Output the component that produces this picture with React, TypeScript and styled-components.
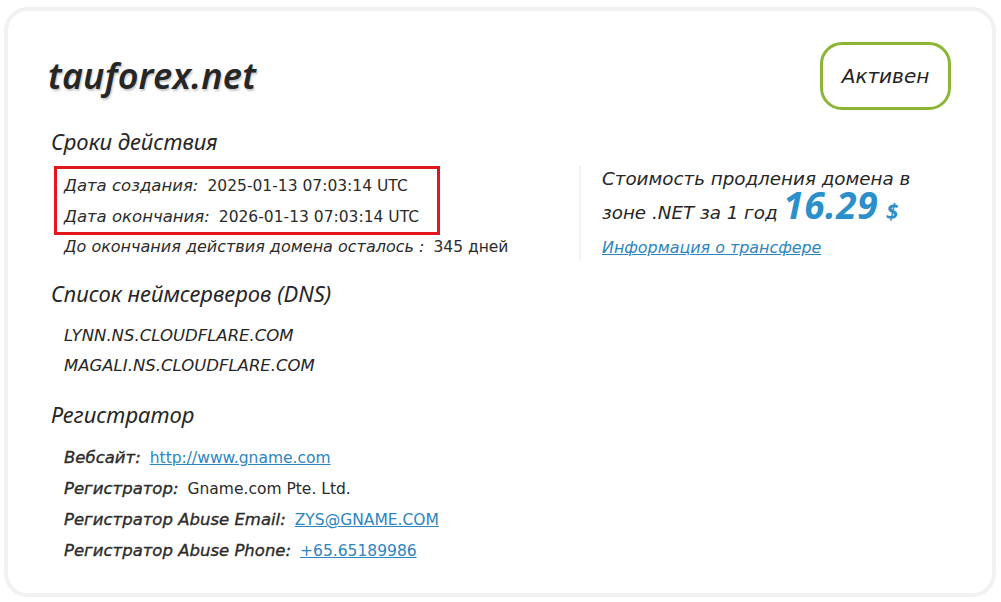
import React from 'react';
import styled, { createGlobalStyle } from 'styled-components';

const GlobalStyle = createGlobalStyle`
  html, body {
    margin: 0;
    padding: 0;
    background: #ffffff;
  }
  body {
    font-family: 'DejaVu Sans', 'Noto Sans', sans-serif;
    color: #2b2b2b;
  }
`;

const DATES = [
  { id: 1, label: 'Дата создания:', value: '2025-01-13 07:03:14 UTC' },
  { id: 2, label: 'Дата окончания:', value: '2026-01-13 07:03:14 UTC' },
];

const NAMESERVERS = ['LYNN.NS.CLOUDFLARE.COM', 'MAGALI.NS.CLOUDFLARE.COM'];

const REGISTRAR = [
  { id: 1, label: 'Вебсайт:', value: 'http://www.gname.com', link: true },
  { id: 2, label: 'Регистратор:', value: 'Gname.com Pte. Ltd.', link: false },
  { id: 3, label: 'Регистратор Abuse Email:', value: 'ZYS@GNAME.COM', link: true },
  { id: 4, label: 'Регистратор Abuse Phone:', value: '+65.65189986', link: true },
];

const App = () => {
  return (
    <>
      <GlobalStyle />
      <Page>
        <Card>
          <Header>
            <Domain>tauforex.net</Domain>
            <StatusBadge>Активен</StatusBadge>
          </Header>

          <SectionTitle>Сроки действия</SectionTitle>
          <TermsRow>
            <TermsMain>
              <Highlight>
                {DATES.map(({ id, label, value }) => (
                  <InfoRow key={id}>
                    <Label>{label}</Label>
                    <Value>{value}</Value>
                  </InfoRow>
                ))}
              </Highlight>
              <InfoRow $indent $height={24}>
                <DaysLabel>До окончания действия домена осталось :</DaysLabel>
                <Value>345 дней</Value>
              </InfoRow>
            </TermsMain>
            <PriceBox>
              <PriceText>
                Стоимость продления домена в зоне .NET за 1 год{' '}
                <Price>16.29</Price>
                <Currency>$</Currency>
              </PriceText>
              <TransferLink href="#">Информация о трансфере</TransferLink>
            </PriceBox>
          </TermsRow>

          <SectionTitle>Список неймсерверов (DNS)</SectionTitle>
          <List $top={4} $bottom={9}>
            {NAMESERVERS.map((ns) => (
              <ServerRow key={ns}>{ns}</ServerRow>
            ))}
          </List>

          <SectionTitle>Регистратор</SectionTitle>
          <List $top={4} $bottom={0}>
            {REGISTRAR.map(({ id, label, value, link }) => (
              <InfoRow key={id}>
                <Label $bold>{label}</Label>
                {link ? <ValueLink href="#">{value}</ValueLink> : <Value>{value}</Value>}
              </InfoRow>
            ))}
          </List>
        </Card>
      </Page>
    </>
  );
};

export default App;

const Page = styled.div`
  width: 1001px;
  height: 602px;
  padding: 7px 5px 5px 4px;
  box-sizing: border-box;
`;

const Card = styled.div`
  box-sizing: border-box;
  height: 590px;
  border: 4px solid #f1f1f1;
  border-radius: 24px;
  padding: 30px 40px 0 40px;
  display: flex;
  flex-direction: column;
`;

const Header = styled.div`
  display: flex;
  justify-content: space-between;
  align-items: flex-start;
  height: 76px;
`;

const Domain = styled.h1`
  margin: 0;
  padding-top: 10px;
  font-family: 'Noto Sans', sans-serif;
  font-size: 36px;
  font-weight: 600;
  font-style: italic;
  color: #262626;
  text-shadow: 1px 2px 2px rgba(0, 0, 0, 0.22);
  letter-spacing: 0.2px;
`;

const StatusBadge = styled.div`
  box-sizing: border-box;
  width: 131px;
  height: 68px;
  margin-right: 1px;
  margin-top: 1px;
  border: 3px solid #8bb634;
  border-radius: 22px;
  display: flex;
  align-items: center;
  justify-content: center;
  font-size: 20px;
  font-style: italic;
  color: #222;
`;

const SectionTitle = styled.h2`
  margin: 0;
  padding-left: 3px;
  height: 48px;
  line-height: 48px;
  font-family: 'Noto Sans', sans-serif;
  font-size: 22px;
  font-weight: 400;
  font-style: italic;
  color: #262626;
`;

const TermsRow = styled.div`
  display: flex;
  align-items: flex-start;
  margin-bottom: 9px;
`;

const TermsMain = styled.div`
  width: 531px;
  padding-top: 1px;
`;

const Highlight = styled.div`
  width: 386px;
  box-sizing: border-box;
  margin-left: 6px;
  border: 3px solid #e3161b;
  padding: 1px 0 0 7px;
`;

const InfoRow = styled.div<{ $indent?: boolean; $height?: number }>`
  display: flex;
  align-items: baseline;
  gap: 9px;
  height: ${({ $height }) => $height ?? 31}px;
  line-height: ${({ $height }) => $height ?? 31}px;
  padding-left: ${({ $indent }) => ($indent ? '16px' : '0')};
  white-space: nowrap;
`;

const Label = styled.span<{ $bold?: boolean }>`
  font-size: 16.5px;
  font-style: italic;
  color: #2b2b2b;
  -webkit-text-stroke: ${({ $bold }) => ($bold ? '0.35px #2b2b2b' : '0')};
`;

const DaysLabel = styled(Label)`
  font-size: 16px;
`;

const Value = styled.span`
  font-size: 15.5px;
  color: #2b2b2b;
`;

const ValueLink = styled.a`
  font-size: 15.5px;
  color: #2c86c0;
  text-decoration: underline;
`;

const PriceBox = styled.div`
  border-left: 2px solid #f3f3f3;
  padding: 0 0 2px 21px;
  width: 330px;
`;

const PriceText = styled.div`
  margin-top: -3px;
  font-size: 18.3px;
  font-style: italic;
  line-height: 34px;
  color: #262626;
`;

const Price = styled.span`
  font-family: 'Noto Sans', sans-serif;
  font-size: 37px;
  line-height: 0;
  font-weight: 700;
  font-style: italic;
  color: #2b8fcc;
  letter-spacing: 0.5px;
`;

const Currency = styled.span`
  margin-left: 8px;
  font-family: 'Noto Sans', sans-serif;
  font-size: 22px;
  line-height: 0;
  font-weight: 700;
  font-style: italic;
  color: #2b8fcc;
`;

const TransferLink = styled.a`
  display: block;
  margin-top: 8px;
  line-height: 20px;
  font-size: 15.9px;
  font-style: italic;
  color: #2c86c0;
  text-decoration: underline;
`;

const List = styled.div<{ $top: number; $bottom: number }>`
  padding: ${({ $top }) => $top}px 0 0 16px;
  margin-bottom: ${({ $bottom }) => $bottom}px;
`;

const ServerRow = styled.div`
  height: 30px;
  line-height: 30px;
  font-size: 16.5px;
  font-style: italic;
  color: #262626;
`;
